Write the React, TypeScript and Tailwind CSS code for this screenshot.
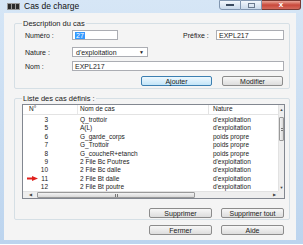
import React from 'react';

const rows = [
  { n: '3', nom: 'Q_trottoir', nature: "d'exploitation" },
  { n: '5', nom: 'A(L)', nature: "d'exploitation" },
  { n: '6', nom: 'G_garde_corps', nature: 'poids propre' },
  { n: '7', nom: 'G_Trottoir', nature: 'poids propre' },
  { n: '8', nom: 'G_coucheR+etanch', nature: 'poids propre' },
  { n: '9', nom: '2 File Bc Poutres', nature: "d'exploitation" },
  { n: '10', nom: '2 File Bc dalle', nature: "d'exploitation" },
  { n: '11', nom: '2 File Bt dalle', nature: "d'exploitation", arrow: true },
  { n: '12', nom: '2 File Bt poutre', nature: "d'exploitation" },
];

const Btn = ({ label, w, def = false }: { label: string; w: string; def?: boolean }) => (
  <div
    className={`h-[10px] ${w} flex items-center justify-center rounded-[2px] border text-[7px] leading-none text-[#1a1a1a] ${
      def
        ? 'border-[#3c7fb1] bg-gradient-to-b from-[#eef8fe] to-[#c3e5f8]'
        : 'border-[#8c8c8c] bg-gradient-to-b from-[#f7f7f7] to-[#dddddd]'
    }`}
  >
    {label}
  </div>
);

const Field = ({ w, children }: { w: string; children?: React.ReactNode }) => (
  <div className={`h-[10px] ${w} bg-white border border-[#abadb3] flex items-center px-[2px] text-[7px] leading-none`}>
    {children}
  </div>
);

const RedArrow = () => (
  <svg width="11" height="5" viewBox="0 0 11 5">
    <rect x="0" y="1.5" width="6" height="2" fill="#e0201c" />
    <polygon points="5,0 11,2.5 5,5" fill="#e0201c" />
  </svg>
);

export default function App() {
  return (
    <div className="w-[303px] h-[245px] bg-white overflow-hidden font-['Liberation_Sans',Arial,sans-serif] text-[#1a1a1a]">
      <div className="relative w-[303px] h-[244px] bg-gradient-to-b from-[#d6e6f6] to-[#bcd4ee] pl-[4px] pr-[7px] pb-[4px] flex flex-col">
        {/* title bar */}
        <div className="h-[13px] flex items-center pl-[3px] gap-[4px] shrink-0">
          <svg width="13" height="7" viewBox="0 0 13 7">
            <rect x="0" y="0" width="13" height="7" fill="#9a9a9a" />
            <rect x="1" y="1" width="3" height="5" fill="#2a2a2a" />
            <rect x="5" y="1" width="3" height="5" fill="#2a2a2a" />
            <rect x="9" y="1" width="3" height="5" fill="#2a2a2a" />
          </svg>
          <span className="text-[8.5px] leading-none text-[#111]">Cas de charge</span>
        </div>

        {/* caption buttons */}
        <div className="absolute top-0 right-[2px] flex h-[10px]">
          <div className="w-[22px] h-[10px] rounded-bl-[3px] border border-[#8196b0] bg-gradient-to-b from-[#f2f7fc] to-[#c9d9ea] flex items-center justify-center">
            <div className="w-[8px] h-[2px] bg-[#3a4a5e]" />
          </div>
          <div className="w-[21px] h-[10px] border-y border-r border-[#8196b0] bg-gradient-to-b from-[#f2f7fc] to-[#c9d9ea] flex items-center justify-center">
            <div className="w-[7px] h-[5px] border border-[#6a7a8e]" />
          </div>
          <div className="w-[39px] h-[10px] rounded-br-[3px] border-y border-r border-[#7a3a33] bg-gradient-to-b from-[#e8a598] via-[#c9483b] to-[#d46a5c] flex items-center justify-center text-white text-[8px] font-bold leading-none">
            x
          </div>
        </div>

        {/* client area */}
        <div className="flex-1 bg-[#f4f4f4] flex flex-col pl-[10px]">
          {/* Description du cas */}
          <fieldset className="mt-[6px] w-[276px] border border-[#d5dfe5] rounded-[2px] pl-[10px] pr-[5px] pt-[2px] pb-[2px]">
            <legend className="-ml-[3px] px-[1px] text-[7.5px] leading-[9px]">Description du cas</legend>
            <div className="flex items-center h-[10px]">
              <span className="w-[47px] text-[7px] leading-none">Numéro :</span>
              <Field w="w-[46px]">
                <span className="bg-[#3399ff] text-white px-[1px]">27</span>
              </Field>
              <span className="ml-[65px] w-[33px] text-[7px] leading-none">Préfixe :</span>
              <Field w="w-[68px]">EXPL217</Field>
            </div>
            <div className="flex items-center h-[10px] mt-[7px]">
              <span className="w-[47px] text-[7px] leading-none">Nature :</span>
              <div className="h-[10px] w-[76px] bg-white border border-[#abadb3] flex items-center justify-between pl-[3px] pr-[3px] text-[7px] leading-none">
                <span>d'exploitation</span>
                <span className="text-[5px]">▼</span>
              </div>
            </div>
            <div className="flex items-center h-[10px] mt-[4px]">
              <span className="w-[47px] text-[7px] leading-none">Nom :</span>
              <Field w="w-[212px]">EXPL217</Field>
            </div>
            <div className="flex justify-end gap-[10px] mt-[5px] pr-[1px]">
              <Btn label="Ajouter" w="w-[71px]" def />
              <Btn label="Modifier" w="w-[61px]" />
            </div>
          </fieldset>

          {/* Liste des cas définis */}
          <fieldset className="mt-[5px] w-[276px] border border-[#d5dfe5] rounded-[2px] pl-[7px] pr-[4px] pt-[1px] pb-[1px]">
            <legend className="px-[1px] text-[7.5px] leading-[9px]">Liste des cas définis :</legend>
            <div className="w-[263px] h-[95px] border border-[#828790] bg-white grid grid-cols-[1fr_6px] grid-rows-[1fr_7px] overflow-hidden">
              <div className="overflow-hidden text-[6.5px] leading-none">
                <div className="h-[10px] flex items-center border-b border-[#e3e3e3] text-[#222]">
                  <div className="w-[55px] pl-[6px] h-full flex items-center border-r border-[#e8e8e8]">N°</div>
                  <div className="w-[131px] pl-[2px] h-full flex items-center border-r border-[#e3e3e3]">Nom de cas</div>
                  <div className="pl-[4px]">Nature</div>
                </div>
                <div className="pt-[1px]">
                  {rows.map((r) => (
                    <div key={r.n} className="h-[8.4px] flex items-center">
                      <div className="w-[55px] flex items-center">
                        <div className="w-[16px] flex justify-end pr-[1px]">{r.arrow && <RedArrow />}</div>
                        <div className="w-[9px] text-right">{r.n}</div>
                      </div>
                      <div className="w-[131px] pl-[2px]">{r.nom}</div>
                      <div className="pl-[4px]">{r.nature}</div>
                    </div>
                  ))}
                </div>
              </div>

              {/* vertical scrollbar */}
              <div className="bg-[#eeeeee] border-l border-[#e2e2e2] flex flex-col items-center">
                <div className="h-[9px] flex items-center text-[4px] text-[#444]">▲</div>
                <div className="mt-[3px] w-[5px] h-[24px] rounded-[1px] border border-[#999] bg-gradient-to-r from-[#f4f4f4] to-[#d8d8d8] flex items-center justify-center">
                  <div className="w-[2px] h-[3px] border-y border-[#777]" />
                </div>
                <div className="flex-1" />
                <div className="h-[7px] flex items-center text-[4px] text-[#444]">▼</div>
              </div>

              {/* horizontal scrollbar */}
              <div className="bg-[#eeeeee] border-t border-[#e2e2e2] flex items-center">
                <div className="w-[14px] flex justify-center text-[4px] text-[#444]">◀</div>
                <div className="w-[158px] h-[6px] rounded-[1px] border border-[#999] bg-gradient-to-b from-[#f4f4f4] to-[#d8d8d8] flex items-center justify-center">
                  <div className="w-[3px] h-[3px] border-x border-[#777]" />
                </div>
                <div className="flex-1" />
                <div className="w-[8px] flex justify-center text-[4px] text-[#444]">▶</div>
              </div>
              <div className="bg-[#eeeeee]" />
            </div>
            <div className="flex justify-end gap-[9px] mt-[9px] pr-[1px]">
              <Btn label="Supprimer" w="w-[63px]" />
              <Btn label="Supprimer tout" w="w-[63px]" />
            </div>
          </fieldset>

          <div className="w-[276px] flex justify-end gap-[9px] mt-[5px] pr-[6px]">
            <Btn label="Fermer" w="w-[63px]" />
            <Btn label="Aide" w="w-[63px]" />
          </div>
        </div>
      </div>
    </div>
  );
}
